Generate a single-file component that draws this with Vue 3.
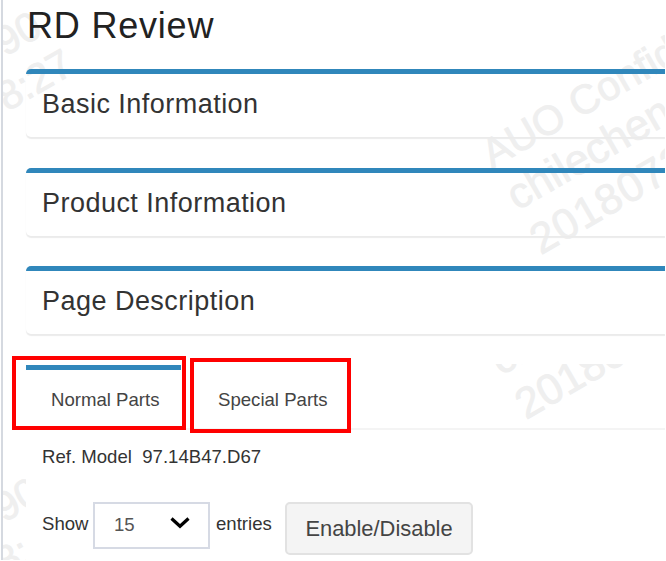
<script setup>
const sections = ['Basic Information', 'Product Information', 'Page Description']
</script>

<template>
  <div class="page">
    <svg class="watermark" width="666" height="561" aria-hidden="true">
      <defs>
        <clipPath id="tabs-area"><rect x="440" y="364" width="225" height="70" /></clipPath>
        <clipPath id="gutter"><rect x="3" y="470" width="23" height="90" /></clipPath>
        <clipPath id="whole"><rect x="3" y="0" width="662" height="262" /></clipPath>
      </defs>
      <g clip-path="url(#whole)">
        <g transform="translate(492 169) rotate(-30)">
          <text x="0" y="0" class="small">AUO Confid</text>
          <text x="1" y="49">chilechen</text>
          <text x="-1" y="99" class="wide">2018072</text>
        </g>
        <text transform="translate(5 57) rotate(-30)" class="small">90</text>
        <text transform="translate(7 112) rotate(-30)" class="small">8:27</text>
      </g>
      <g clip-path="url(#tabs-area)">
        <text transform="translate(501 376) rotate(-30)">chi</text>
        <text transform="translate(526 420) rotate(-30)">20180</text>
      </g>
      <g clip-path="url(#gutter)">
        <text transform="translate(4 523) rotate(-30)" class="small">90</text>
        <text transform="translate(5 577) rotate(-30)" class="small">8:</text>
      </g>
    </svg>
    <main class="content">
      <h1>RD Review</h1>
      <section v-for="name in sections" :key="name" class="card">
        <h2>{{ name }}</h2>
      </section>
      <nav class="tabs">
        <a class="tab active">Normal Parts</a>
        <a class="tab">Special Parts</a>
      </nav>
      <p class="model">Ref. Model&nbsp; 97.14B47.D67</p>
      <div class="controls">
        <span class="label">Show</span>
        <div class="select">
          <span>15</span>
          <svg width="20" height="14" viewBox="0 0 20 14">
            <path d="M1.5 2.5 L10 10.3 L18.5 2.5" fill="none" stroke="#000" stroke-width="3.2" />
          </svg>
        </div>
        <span class="label entries">entries</span>
        <button>Enable/Disable</button>
      </div>
    </main>
    <div class="mark mark-normal"></div>
    <div class="mark mark-special"></div>
  </div>
</template>

<style>
body {
  background: #fff;
}
</style>

<style scoped>
.page {
  position: relative;
  box-sizing: border-box;
  width: 665px;
  height: 560px;
  overflow: hidden;
  padding-left: 2px;
  font-family: "Liberation Sans", Arial, sans-serif;
  color: #333;
}
.page::before {
  content: "";
  position: absolute;
  left: 1px;
  top: 0;
  width: 2px;
  height: 560px;
  background: #d5d9e0;
}
.watermark {
  position: absolute;
  left: 0;
  top: 0;
  font-size: 43px;
  fill: #efefef;
  stroke: #efefef;
  stroke-width: 0.8px;
}
.small {
  font-size: 41px;
}
.wide {
  letter-spacing: 1.1px;
}
.content {
  position: relative;
  padding-left: 24px;
}
h1 {
  margin: 0;
  height: 69px;
  padding-left: 1px;
  line-height: 51px;
  font-size: 36px;
  font-weight: 400;
  letter-spacing: 0.8px;
  color: #222;
}
.card {
  box-sizing: border-box;
  height: 68px;
  margin-bottom: 30.5px;
  padding-left: 16px;
  border-top: 5px solid #3087bb;
  border-radius: 5px 0 0 5px;
  box-shadow: 0 1.5px 1px #ebebeb;
}
h2 {
  margin: 0;
  line-height: 60px;
  font-size: 27px;
  font-weight: 400;
  letter-spacing: 0.47px;
}
.tabs {
  display: flex;
  box-sizing: border-box;
  height: 65px;
  border-bottom: 2px solid #f4f4f4;
}
.tab {
  box-sizing: border-box;
  padding-left: 25px;
  width: 155px;
  border-top: 5px solid transparent;
  line-height: 60px;
  font-size: 18.6px;
  color: #444;
}
.tab.active {
  border-top-color: #3087bb;
}
.tab + .tab {
  margin-left: 12px;
}
.model {
  margin: 0;
  padding: 15px 0 0 16px;
  line-height: 24px;
  font-size: 18.6px;
}
.controls {
  display: flex;
  align-items: flex-start;
  padding: 33px 0 0 16px;
  font-size: 18.6px;
}
.label {
  width: 51px;
  line-height: 43px;
}
.select {
  display: flex;
  align-items: center;
  justify-content: space-between;
  box-sizing: border-box;
  width: 117px;
  height: 47px;
  padding: 0 18px 0 19px;
  border: 2px solid #d6dae4;
  background: #fff;
  color: #555;
}
.select svg {
  margin-top: -4px;
}
.entries {
  margin-left: 6px;
  width: 69px;
}
button {
  box-sizing: border-box;
  width: 188px;
  height: 53px;
  margin-top: 0.5px;
  padding: 0;
  border: 2px solid #e2e2e2;
  border-radius: 5px;
  background: #f4f4f4;
  font-family: inherit;
  font-size: 21.9px;
  color: #444;
}
.mark {
  position: absolute;
  box-sizing: border-box;
  border: 4px solid #f00;
}
.mark-normal {
  left: 12px;
  top: 356px;
  width: 174px;
  height: 74px;
}
.mark-special {
  left: 190px;
  top: 358px;
  width: 161px;
  height: 75px;
}
</style>
